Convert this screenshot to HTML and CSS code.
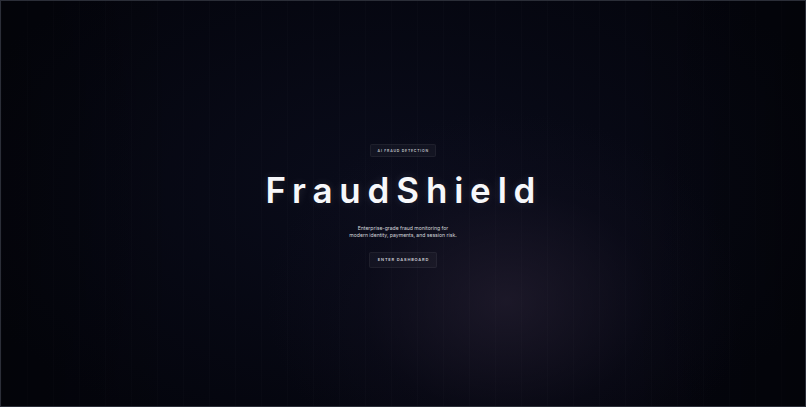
FILE: index.html
```html
<!DOCTYPE html>
<html lang="en">
<head>
<meta charset="utf-8">
<title>FraudShield</title>
<link rel="stylesheet" href="styles.css">
</head>
<body>
<main class="hero">
  <div class="glow"></div>
  <div class="content">
    <span class="badge">AI FRAUD DETECTION</span>
    <h1 class="title">FraudShield</h1>
    <p class="subtitle">Enterprise-grade fraud monitoring for<br>modern identity, payments, and session risk.</p>
    <a class="cta" href="#">ENTER DASHBOARD</a>
  </div>
</main>
</body>
</html>
```
FILE: styles.css
```css
html, body {
  margin: 0;
  padding: 0;
  height: 100%;
  background: #03040b;
}
body {
  font-family: Inter, "Noto Sans", sans-serif;
  color: #f4f5f8;
}
.hero {
  position: relative;
  box-sizing: border-box;
  height: 100vh;
  border: 1px solid #2b2e38;
  overflow: hidden;
  display: flex;
  align-items: center;
  justify-content: center;
  background:
    repeating-linear-gradient(90deg, rgba(255,255,255,0.012) 0 1px, transparent 1px 26px),
    radial-gradient(ellipse 240px 190px at 505px 300px, rgba(36,30,48,0.7), rgba(18,16,32,0.3) 60%, transparent 100%),
    radial-gradient(ellipse 520px 300px at 400px 190px, #0a0c1b, #04050d 90%);
}
.glow {
  position: absolute;
  inset: 0;
  pointer-events: none;
  background: linear-gradient(90deg, rgba(0,0,0,0.3), transparent 22%, transparent 78%, rgba(0,0,0,0.3));
}
.content {
  position: relative;
  display: flex;
  flex-direction: column;
  align-items: center;
  text-align: center;
  padding-top: 5px;
}
.badge {
  font-size: 3.5px;
  line-height: 4px;
  font-weight: 600;
  letter-spacing: 0.22em;
  color: #c2c5ce;
  padding: 3.5px 6px 3.5px 6.5px;
  background: rgba(255,255,255,0.04);
  border: 1px solid rgba(255,255,255,0.05);
  border-radius: 2px;
}
.title {
  margin: 14px 0 0;
  font-size: 35px;
  font-weight: 600;
  letter-spacing: 0.195em;
  line-height: 1.1;
  color: #f7f8fb;
  padding-left: 0.05em;
  text-shadow: 0 0 10px rgba(255,255,255,0.12);
}
.subtitle {
  margin: 15px 0 0;
  font-size: 5.1px;
  line-height: 7.5px;
  color: #d6d8de;
}
.cta {
  margin-top: 12px;
  font-size: 4px;
  line-height: 5px;
  font-weight: 600;
  letter-spacing: 0.2em;
  color: #ccced6;
  text-decoration: none;
  padding: 4.5px 7px 4.5px 8px;
  background: rgba(255,255,255,0.035);
  border: 1px solid rgba(255,255,255,0.05);
  border-radius: 2px;
}
```
